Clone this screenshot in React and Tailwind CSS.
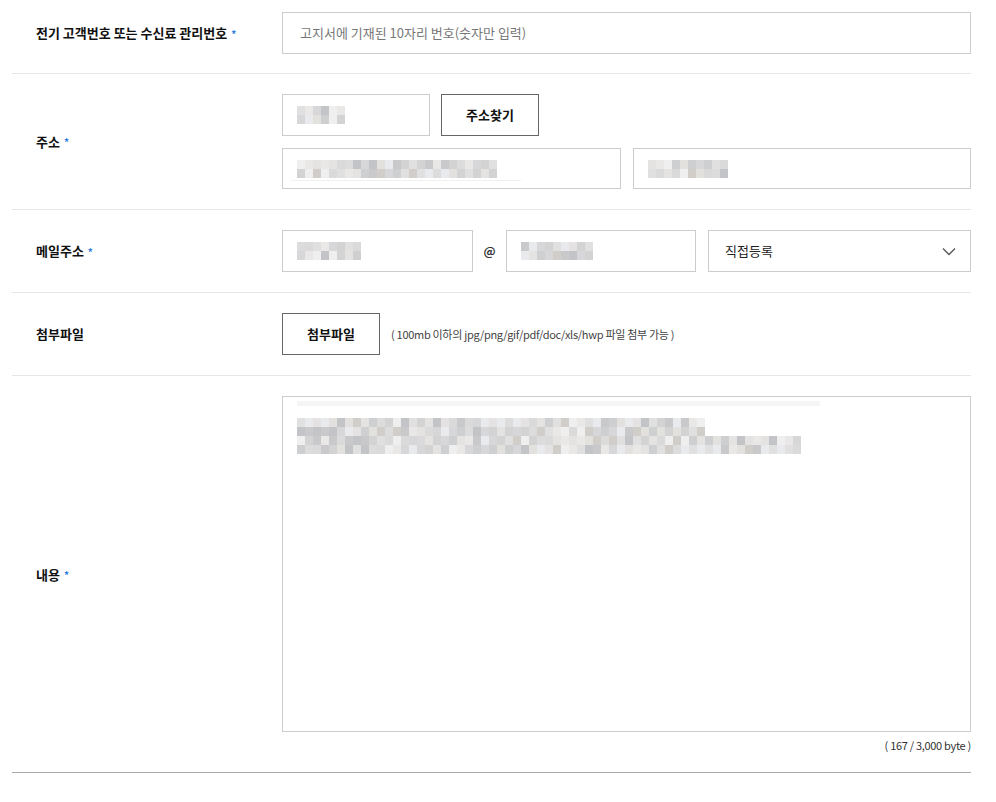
import React from "react";

const greys = ["#d9d9d9", "#cfcfcf", "#e3e1df", "#c9cacd", "#dddddd", "#e8e6e4", "#d3d3d6", "#bdbec2", "#e0dedb", "#cdc8c4", "#eeeeee", "#d6d6d6", "#c4c4c6", "#e6e8ec"];

function Mosaic({ cols, rows = 2, cw = 8, ch = 9, seed = 1 }) {
  const out = [];
  let s = seed;
  for (let r = 0; r < rows; r++) {
    const cells = [];
    for (let c = 0; c < cols; c++) {
      s = (s * 9301 + 49297) % 233280;
      const col = greys[s % greys.length];
      cells.push(<div key={c} style={{ width: cw, height: ch, background: col }} />);
    }
    out.push(<div key={r} className="flex">{cells}</div>);
  }
  return <div className="flex flex-col opacity-90">{out}</div>;
}

function Label({ children, req }) {
  return (
    <div className="w-[270px] shrink-0 pl-6 flex items-center text-[13px] font-bold text-[#111]">
      <span>{children}</span>
      {req && <span className="ml-[4px] text-[#2f7de1] text-[10px] font-bold">*</span>}
    </div>
  );
}

const box = "border border-[#cccccc] bg-white flex items-center px-[14px]";

export default function App() {
  return (
    <div className="w-[996px] h-[802px] bg-white" style={{ fontFamily: '"Noto Sans CJK KR", "Noto Sans", sans-serif' }}>
      <div className="ml-3 w-[959px]">
        {/* row 1 */}
        <div className="flex pt-3 pb-[19px] border-b border-[#e6e6e6]">
          <Label req>전기 고객번호 또는 수신료 관리번호</Label>
          <div className={`${box} h-[42px] flex-1 text-[13px] text-[#777]`}><span className="ml-[3px]">고지서에 기재된 10자리 번호(숫자만 입력)</span></div>
        </div>
        {/* row 2 */}
        <div className="flex pt-5 pb-5 border-b border-[#e6e6e6]">
          <Label req>주소</Label>
          <div className="flex-1 flex flex-col gap-3">
            <div className="flex gap-[11px]">
              <div className={`${box} h-[42px] w-[148px]`}>
                <Mosaic cols={6} seed={3} />
              </div>
              <div className="h-[42px] w-[98px] border border-[#666] flex items-center justify-center text-[13px] font-bold text-[#111]">주소찾기</div>
            </div>
            <div className="flex gap-3">
              <div className={`${box} h-[41px] w-[339px] relative`}>
                <Mosaic cols={25} seed={7} />
                <div className="absolute left-[8px] bottom-[7px] w-[230px] h-[1px] bg-[#f0f0f0]" />
              </div>
              <div className={`${box} h-[41px] flex-1`}>
                <Mosaic cols={10} seed={11} />
              </div>
            </div>
          </div>
        </div>
        {/* row 3 */}
        <div className="flex pt-5 pb-5 border-b border-[#e6e6e6]">
          <Label req>메일주소</Label>
          <div className="flex-1 flex items-center">
            <div className={`${box} h-[42px] w-[191px]`}>
              <Mosaic cols={8} seed={5} />
            </div>
            <div className="w-[33px] text-center text-[12px] font-bold text-[#333]">@</div>
            <div className={`${box} h-[42px] w-[190px]`}>
              <Mosaic cols={9} seed={13} />
            </div>
            <div className={`${box} h-[42px] flex-1 ml-3 justify-between pr-[14px]`}>
              <span className="text-[13px] text-[#222] ml-[2px]">직접등록</span>
              <svg width="14" height="9" viewBox="0 0 14 9" fill="none">
                <path d="M1 1.5 L7 7.5 L13 1.5" stroke="#555" strokeWidth="1.3" />
              </svg>
            </div>
          </div>
        </div>
        {/* row 4 */}
        <div className="flex pt-5 pb-5 border-b border-[#e6e6e6]">
          <Label>첨부파일</Label>
          <div className="flex-1 flex items-center">
            <div className="h-[42px] w-[98px] border border-[#666] flex items-center justify-center text-[13px] font-bold text-[#111]">첨부파일</div>
            <span className="ml-[11px] text-[11px] tracking-[-0.3px] text-[#444]">( 100mb 이하의 jpg/png/gif/pdf/doc/xls/hwp 파일 첨부 가능 )</span>
          </div>
        </div>
        {/* row 5 */}
        <div className="flex pt-5 pb-[18px] border-b border-[#aaaaaa]">
          <Label req>내용</Label>
          <div className="flex-1 flex flex-col">
            <div className="h-[336px] border border-[#cccccc] pl-[14px] pt-[4px]">
              <div className="w-[523px] h-[5px] bg-[#f5f5f5]" />
              <div className="mt-[12px]">
                <Mosaic cols={51} rows={2} cw={8} ch={9} seed={17} />
                <Mosaic cols={63} rows={2} cw={8} ch={9} seed={29} />
              </div>
            </div>
            <div className="mt-[5px] text-right text-[11px] tracking-[-0.3px] text-[#333]">( 167 / 3,000 byte )</div>
          </div>
        </div>
      </div>
    </div>
  );
}
